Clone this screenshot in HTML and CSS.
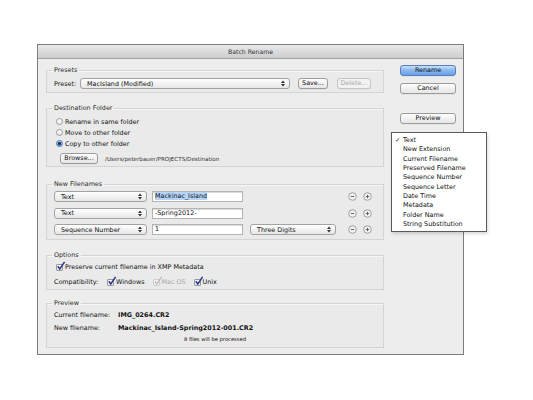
FILE: index.html
```html
<!DOCTYPE html>
<html lang="en">
<head>
    <meta charset="UTF-8">
    <title>Batch Rename</title>
    <link rel="stylesheet" href="styles.css">
</head>
<body>

    <div class="window">
        <div class="titlebar">Batch Rename</div>

        <div class="window-body">
            <div class="main-col">

                <fieldset class="group presets">
                    <legend>Presets</legend>
                    <div class="row">
                        <span class="field-label">Preset:</span>
                        <div class="popup preset-popup">
                            <span>MacIsland (Modified)</span>
                            <svg class="arrows" width="4" height="7" viewBox="0 0 4 7"><path d="M0 3 L2 0.5 L4 3 Z M0 4 L2 6.5 L4 4 Z" fill="#333"/></svg>
                        </div>
                        <button class="push save-btn">Save...</button>
                        <button class="push delete-btn" disabled>Delete...</button>
                    </div>
                </fieldset>

                <fieldset class="group destination">
                    <legend>Destination Folder</legend>
                    <label class="option"><span class="radio"></span>Rename in same folder</label>
                    <label class="option"><span class="radio"></span>Move to other folder</label>
                    <label class="option"><span class="radio checked"></span>Copy to other folder</label>
                    <div class="row browse-row">
                        <button class="push browse-btn">Browse...</button>
                        <span class="path">/Users/peterbauer/PROJECTS/Destination</span>
                    </div>
                </fieldset>

                <fieldset class="group filenames">
                    <legend>New Filenames</legend>
                    <div class="name-row">
                        <div class="popup type-popup">
                            <span>Text</span>
                            <svg class="arrows" width="4" height="7" viewBox="0 0 4 7"><path d="M0 3 L2 0.5 L4 3 Z M0 4 L2 6.5 L4 4 Z" fill="#333"/></svg>
                        </div>
                        <div class="text-field"><span class="selected">Mackinac_Island</span></div>
                        <span class="spacer"></span>
                        <svg class="round-btn" width="9" height="9" viewBox="0 0 9 9"><circle cx="4.5" cy="4.5" r="3.8" fill="#f3f3f3" stroke="#8d8d8d" stroke-width="0.8"/><path d="M2.8 4.5 H6.2" stroke="#555" stroke-width="0.9"/></svg>
                        <svg class="round-btn" width="9" height="9" viewBox="0 0 9 9"><circle cx="4.5" cy="4.5" r="3.8" fill="#f3f3f3" stroke="#8d8d8d" stroke-width="0.8"/><path d="M2.8 4.5 H6.2 M4.5 2.8 V6.2" stroke="#555" stroke-width="0.9"/></svg>
                    </div>
                    <div class="name-row">
                        <div class="popup type-popup">
                            <span>Text</span>
                            <svg class="arrows" width="4" height="7" viewBox="0 0 4 7"><path d="M0 3 L2 0.5 L4 3 Z M0 4 L2 6.5 L4 4 Z" fill="#333"/></svg>
                        </div>
                        <div class="text-field">-Spring2012-</div>
                        <span class="spacer"></span>
                        <svg class="round-btn" width="9" height="9" viewBox="0 0 9 9"><circle cx="4.5" cy="4.5" r="3.8" fill="#f3f3f3" stroke="#8d8d8d" stroke-width="0.8"/><path d="M2.8 4.5 H6.2" stroke="#555" stroke-width="0.9"/></svg>
                        <svg class="round-btn" width="9" height="9" viewBox="0 0 9 9"><circle cx="4.5" cy="4.5" r="3.8" fill="#f3f3f3" stroke="#8d8d8d" stroke-width="0.8"/><path d="M2.8 4.5 H6.2 M4.5 2.8 V6.2" stroke="#555" stroke-width="0.9"/></svg>
                    </div>
                    <div class="name-row">
                        <div class="popup type-popup">
                            <span>Sequence Number</span>
                            <svg class="arrows" width="4" height="7" viewBox="0 0 4 7"><path d="M0 3 L2 0.5 L4 3 Z M0 4 L2 6.5 L4 4 Z" fill="#333"/></svg>
                        </div>
                        <div class="text-field">1</div>
                        <div class="popup digits-popup">
                            <span>Three Digits</span>
                            <svg class="arrows" width="4" height="7" viewBox="0 0 4 7"><path d="M0 3 L2 0.5 L4 3 Z M0 4 L2 6.5 L4 4 Z" fill="#333"/></svg>
                        </div>
                        <span class="spacer"></span>
                        <svg class="round-btn" width="9" height="9" viewBox="0 0 9 9"><circle cx="4.5" cy="4.5" r="3.8" fill="#f3f3f3" stroke="#8d8d8d" stroke-width="0.8"/><path d="M2.8 4.5 H6.2" stroke="#555" stroke-width="0.9"/></svg>
                        <svg class="round-btn" width="9" height="9" viewBox="0 0 9 9"><circle cx="4.5" cy="4.5" r="3.8" fill="#f3f3f3" stroke="#8d8d8d" stroke-width="0.8"/><path d="M2.8 4.5 H6.2 M4.5 2.8 V6.2" stroke="#555" stroke-width="0.9"/></svg>
                    </div>
                </fieldset>

                <fieldset class="group options">
                    <legend>Options</legend>
                    <label class="check-row">
                        <span class="checkbox"><svg width="10" height="10" viewBox="0 0 10 10"><path d="M1.8 5.2 L3.8 8 L8.6 0.8" fill="none" stroke="#27368a" stroke-width="1.5"/></svg></span>
                        Preserve current filename in XMP Metadata
                    </label>
                    <div class="check-row compat">
                        <span class="field-label">Compatibility:</span>
                        <label class="check"><span class="checkbox"><svg width="10" height="10" viewBox="0 0 10 10"><path d="M1.8 5.2 L3.8 8 L8.6 0.8" fill="none" stroke="#27368a" stroke-width="1.5"/></svg></span>Windows</label>
                        <label class="check disabled"><span class="checkbox"><svg width="10" height="10" viewBox="0 0 10 10"><path d="M1.8 5.2 L3.8 8 L8.6 0.8" fill="none" stroke="#b4b4b4" stroke-width="1.1"/></svg></span>Mac OS</label>
                        <label class="check"><span class="checkbox"><svg width="10" height="10" viewBox="0 0 10 10"><path d="M1.8 5.2 L3.8 8 L8.6 0.8" fill="none" stroke="#27368a" stroke-width="1.5"/></svg></span>Unix</label>
                    </div>
                </fieldset>

                <fieldset class="group preview">
                    <legend>Preview</legend>
                    <div class="preview-row">
                        <span class="preview-label">Current filename:</span>
                        <span class="preview-value">IMG_0264.CR2</span>
                    </div>
                    <div class="preview-row">
                        <span class="preview-label">New filename:</span>
                        <span class="preview-value">Mackinac_Island-Spring2012-001.CR2</span>
                    </div>
                    <div class="file-count">8 files will be processed</div>
                </fieldset>

            </div>

            <div class="side-col">
                <button class="push default-btn">Rename</button>
                <button class="push">Cancel</button>
                <button class="push preview-btn">Preview</button>
            </div>
        </div>
    </div>

    <!-- open popup for the first "Text" element -->
    <ul class="menu">
        <li class="checked">Text</li>
        <li>New Extension</li>
        <li>Current Filename</li>
        <li>Preserved Filename</li>
        <li>Sequence Number</li>
        <li>Sequence Letter</li>
        <li>Date Time</li>
        <li>Metadata</li>
        <li>Folder Name</li>
        <li>String Substitution</li>
    </ul>

</body>
</html>
```

FILE: styles.css
```css
body {
    font-family: 'DejaVu Sans', 'Lucida Grande', sans-serif;
    font-size: 6.4px;
    color: #111;
    background: #fff;
    margin: 0;
    padding: 44px 0 0 37px;
    width: 533px;
    height: 400px;
    box-sizing: border-box;
    position: relative;
}

.window {
    width: 427px;
    height: 311px;
    box-sizing: border-box;
    border: 1px solid #7c7c7c;
    background: #ededed;
    display: flex;
    flex-direction: column;
}

.titlebar {
    height: 13px;
    line-height: 13px;
    text-align: center;
    font-size: 6.2px;
    color: #333;
    background: linear-gradient(#e9e9e9, #cdcdcd);
    border-bottom: 1px solid #a3a3a3;
}

.window-body {
    display: flex;
    padding: 0 6px 0 8px;
}

.main-col {
    width: 338px;
    display: flex;
    flex-direction: column;
}

.side-col {
    width: 56px;
    margin-left: 16px;
    display: flex;
    flex-direction: column;
    padding-top: 6px;
}

/* group boxes */
.group {
    margin: 0;
    padding: 0 7px;
    border: 1px solid #d4d4d4;
    background: #eaeaea;
    box-shadow: inset 0 1px 0 #f6f6f6;
    min-width: 0;
}

.group legend {
    padding: 0 2px;
    margin-left: -2px;
    line-height: 8px;
    color: #2a2a2a;
}

.presets { margin-top: 7px; padding-top: 4px; padding-bottom: 3px; }
.destination { margin-top: 11px; padding-top: 4px; padding-bottom: 2px; }
.filenames { margin-top: 13px; padding-top: 3px; padding-bottom: 4px; }
.options { margin-top: 11px; padding-top: 3px; padding-bottom: 2px; }
.preview { margin-top: 9px; padding-top: 3px; padding-bottom: 3px; }

.row {
    display: flex;
    align-items: center;
    height: 11px;
}

.field-label {
    width: 26px;
}

/* push buttons */
.push {
    font: inherit;
    color: #111;
    height: 11px;
    padding: 0;
    border: 1px solid #9c9c9c;
    border-radius: 3px;
    background: linear-gradient(#ffffff, #f1f1f1 50%, #e6e6e6);
    box-shadow: 0 0.5px 0 rgba(0, 0, 0, 0.08);
    text-align: center;
    line-height: 9px;
}

.push:disabled {
    color: #a8a8a8;
    border-color: #c6c6c6;
    background: #f2f2f2;
}

.side-col .push {
    width: 56px;
}

.side-col .push + .push {
    margin-top: 7px;
}

.side-col .preview-btn {
    margin-top: 19px !important;
}

.default-btn {
    border-color: #5a7db5;
    background: linear-gradient(#c9e0fb, #86b6ef 50%, #6aa3ea);
}

.save-btn {
    width: 30px;
    margin-left: 8px;
}

.delete-btn {
    width: 34px;
    margin-left: 9px;
}

/* popup buttons */
.popup {
    height: 11px;
    box-sizing: border-box;
    border: 1px solid #a2a2a2;
    border-radius: 3px;
    background: linear-gradient(#ffffff, #f2f2f2 50%, #e7e7e7);
    display: flex;
    align-items: center;
    justify-content: space-between;
    padding: 0 4px 0 6px;
}

.preset-popup { width: 210px; }
.type-popup { width: 93px; }
.digits-popup { width: 86px; margin-left: 7px; }

/* radios and checkboxes */
.option {
    display: flex;
    align-items: center;
    height: 11px;
}

.radio {
    width: 7px;
    height: 7px;
    box-sizing: border-box;
    border: 1px solid #9a9a9a;
    border-radius: 50%;
    background: linear-gradient(#ffffff, #e8e8e8);
    margin: 0 2px 0 2px;
    position: relative;
}

.radio.checked {
    border-color: #4f74b0;
    background: radial-gradient(circle, #18284a 0 1.3px, transparent 1.6px), linear-gradient(#b6d4f6, #5e98e2);
}

.browse-row {
    margin-top: 4px;
    padding-left: 6px;
}

.browse-btn {
    width: 38px;
}

.path {
    font-size: 5.6px;
    margin-left: 7px;
    color: #333;
}

/* new filenames */
.name-row {
    display: flex;
    align-items: center;
    height: 11px;
}

.name-row + .name-row {
    margin-top: 5.5px;
}

.text-field {
    width: 91px;
    height: 11px;
    box-sizing: border-box;
    margin-left: 5px;
    border: 1px solid #b3b3b3;
    background: #fff;
    box-shadow: inset 0 1px 0 #dcdcdc;
    padding: 0 2px;
    line-height: 9px;
}

.selected {
    background: #b5d4f8;
}

.spacer {
    flex: 1;
}

.round-btn {
    display: block;
    margin-left: 6px;
}

.round-btn:last-child {
    margin-right: 4px;
}

/* options */
.check-row {
    display: flex;
    align-items: center;
    height: 10px;
}

.check-row + .check-row {
    margin-top: 5px;
}

.checkbox {
    width: 7px;
    height: 7px;
    box-sizing: border-box;
    border: 1px solid #999;
    border-radius: 1px;
    background: linear-gradient(#ffffff, #e6e6e6);
    margin: 0 2px 0 2px;
    position: relative;
}

.checkbox svg {
    position: absolute;
    left: -1px;
    top: -4px;
}

.compat .field-label {
    width: 51px;
}

.check {
    display: flex;
    align-items: center;
    margin-right: 6px;
}

.check.disabled {
    color: #a9a9a9;
}

.check.disabled .checkbox {
    border-color: #d0d0d0;
    background: #f0f0f0;
}

/* preview */
.preview-row {
    display: flex;
    align-items: center;
    height: 10px;
}

.preview-row + .preview-row {
    margin-top: 3px;
}

.preview-label {
    width: 64px;
}

.preview-value {
    font-weight: bold;
}

.file-count {
    font-size: 5.2px;
    text-align: center;
    height: 9px;
    line-height: 9px;
    margin-top: 2px;
}

/* popup menu */
.menu {
    position: absolute;
    left: 391px;
    top: 132px;
    width: 96px;
    margin: 0;
    padding: 3px 0 2px;
    list-style: none;
    background: #fff;
    border: 1px solid #5a5a5a;
    box-shadow: 1px 2px 3px rgba(0, 0, 0, 0.15);
    box-sizing: border-box;
}

.menu li {
    height: 9.35px;
    line-height: 9.35px;
    padding-left: 11px;
    position: relative;
}

.menu li.checked::before {
    content: "\2713";
    position: absolute;
    left: 3px;
}
```
